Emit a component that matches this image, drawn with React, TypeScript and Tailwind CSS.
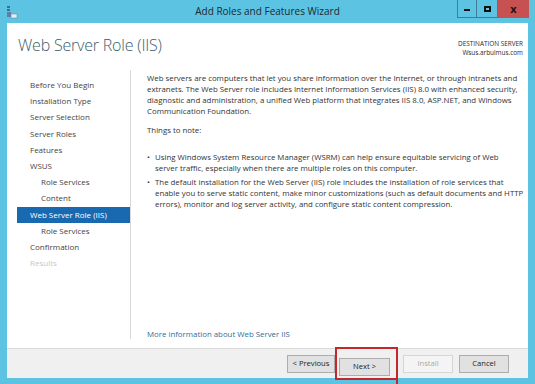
import React from "react";

const navItems = [
  { label: "Before You Begin", indent: false },
  { label: "Installation Type", indent: false },
  { label: "Server Selection", indent: false },
  { label: "Server Roles", indent: false },
  { label: "Features", indent: false },
  { label: "WSUS", indent: false },
  { label: "Role Services", indent: true },
  { label: "Content", indent: true },
  { label: "Web Server Role (IIS)", indent: false, active: true },
  { label: "Role Services", indent: true },
  { label: "Confirmation", indent: false },
  { label: "Results", indent: false, disabled: true },
];

const WizardIcon = () => (
  <svg width="12" height="14" viewBox="0 0 12 14">
    <rect x="1" y="1" width="3" height="2" fill="#3b6e9c" />
    <rect x="1" y="4" width="3" height="2" fill="#3b6e9c" />
    <rect x="1" y="7" width="4" height="5" fill="#5a7fa8" />
    <rect x="5" y="9" width="6" height="4" fill="#e8eef3" stroke="#6f8aa8" strokeWidth="0.6" />
  </svg>
);

const App = () => {
  return (
    <div
      className="relative w-[535px] h-[384px] bg-[#5cc3e2] flex flex-col overflow-hidden"
      style={{ fontFamily: '"Open Sans", "Noto Sans", sans-serif' }}
    >
      {/* Title bar */}
      <div className="relative h-[23px] flex items-center shrink-0">
        <div className="pl-[6px] pt-[1px]">
          <WizardIcon />
        </div>
        <p className="absolute left-0 right-0 top-[6px] text-center text-[10px] text-[#1c2a33] leading-none">
          Add Roles and Features Wizard
        </p>
        <div className="absolute right-[6px] top-0 flex">
          <div className="w-[20px] h-[18px] border border-[#3f7e99] border-t-0 bg-[#5cc3e2] flex items-center justify-center">
            <div className="w-[6px] h-[2px] bg-[#111] mt-[3px]" />
          </div>
          <div className="w-[21px] h-[18px] border border-[#3f7e99] border-t-0 border-l-0 bg-[#5cc3e2] flex items-center justify-center">
            <div className="w-[7px] h-[6px] border-[2px] border-[#111]" />
          </div>
          <div className="w-[31px] h-[18px] bg-[#c75050] flex items-center justify-center">
            <span className="text-[11px] font-bold text-[#2a1010] leading-none -mt-[2px]">x</span>
          </div>
        </div>
      </div>

      {/* Body */}
      <div className="flex-1 mx-[7px] bg-white flex flex-col min-h-0">
        <div className="flex justify-between items-start pl-[11px] pr-[5px] pt-[14px] h-[47px] shrink-0">
          <h1 className="text-[16px] leading-none font-light text-[#3d5d6e] tracking-[-0.2px]">
            Web Server Role (IIS)
          </h1>
          <div className="text-right text-[6.4px] leading-[9px] text-[#2a2a2a] pt-[2px]">
            <p>DESTINATION SERVER</p>
            <p>Wsus.arbulmus.com</p>
          </div>
        </div>

        <div className="flex flex-1 min-h-0">
          {/* Nav */}
          <div className="w-[124px] shrink-0 pt-[7px] pl-[10px] border-r border-[#d8d8d8] mb-[9px]">
            {navItems.map((item, i) => (
              <div
                key={i}
                className={`h-[16.2px] flex items-center text-[8px] whitespace-nowrap ${
                  item.indent ? "pl-[24px]" : "pl-[13px]"
                } ${
                  item.active
                    ? "bg-[#1869b0] text-white"
                    : item.disabled
                    ? "text-[#c8c8c8]"
                    : "text-[#444]"
                }`}
              >
                {item.label}
              </div>
            ))}
          </div>

          {/* Content */}
          <div className="flex-1 flex flex-col pl-[16px] pr-[4px] pt-[3px] pb-[8px] text-[7.85px] leading-[11px] text-[#333]">
            <p>
              Web servers are computers that let you share information over the Internet, or through intranets and
              extranets. The Web Server role includes Internet Information Services (IIS) 8.0 with enhanced security,
              diagnostic and administration, a unified Web platform that integrates IIS 8.0, ASP.NET, and Windows
              Communication Foundation.
            </p>
            <p className="mt-[8px]">Things to note:</p>
            <ul className="mt-[16px] flex flex-col gap-[3px]">
              <li className="flex">
                <span className="w-[8px] shrink-0">•</span>
                <span>
                  Using Windows System Resource Manager (WSRM) can help ensure equitable servicing of Web
                  <br />
                  server traffic, especially when there are multiple roles on this computer.
                </span>
              </li>
              <li className="flex">
                <span className="w-[8px] shrink-0">•</span>
                <span>
                  The default installation for the Web Server (IIS) role includes the installation of role services
                  that enable you to serve static content, make minor customizations (such as default documents and
                  HTTP errors), monitor and log server activity, and configure static content compression.
                </span>
              </li>
            </ul>
            <div className="flex-1" />
            <p className="text-[#2f6f9a]">More information about Web Server IIS</p>
          </div>
        </div>

        {/* Footer */}
        <div className="h-[30px] shrink-0 bg-[#f0f0f0] border-t border-[#dadada] flex items-center justify-end pr-[19px]">
          <button className="w-[48px] h-[18px] bg-[#e1e1e1] border border-[#adadad] text-[7.6px] text-[#222]">
            &lt; Previous
          </button>
          <div className="border-[2px] border-[#c0282b] pl-[2px] pr-[6px] py-[2px]">
            <button className="w-[51px] h-[18px] bg-[#e1e1e1] border border-[#adadad] text-[7.6px] text-[#222]">
              Next &gt;
            </button>
          </div>
          <button className="ml-[5px] w-[50px] h-[18px] bg-[#f4f4f4] border border-[#d5d5d5] text-[7.6px] text-[#a8a8a8]">
            Install
          </button>
          <button className="ml-[6px] w-[50px] h-[18px] bg-[#e1e1e1] border border-[#adadad] text-[7.6px] text-[#222]">
            Cancel
          </button>
        </div>
      </div>
      <div className="h-[6px] shrink-0" />
      {/* Annotation pointer line below the highlighted button */}
      <div className="absolute left-[396px] top-[376px] w-[2px] h-[8px] bg-[#c0282b]" />
    </div>
  );
};

export default App;
